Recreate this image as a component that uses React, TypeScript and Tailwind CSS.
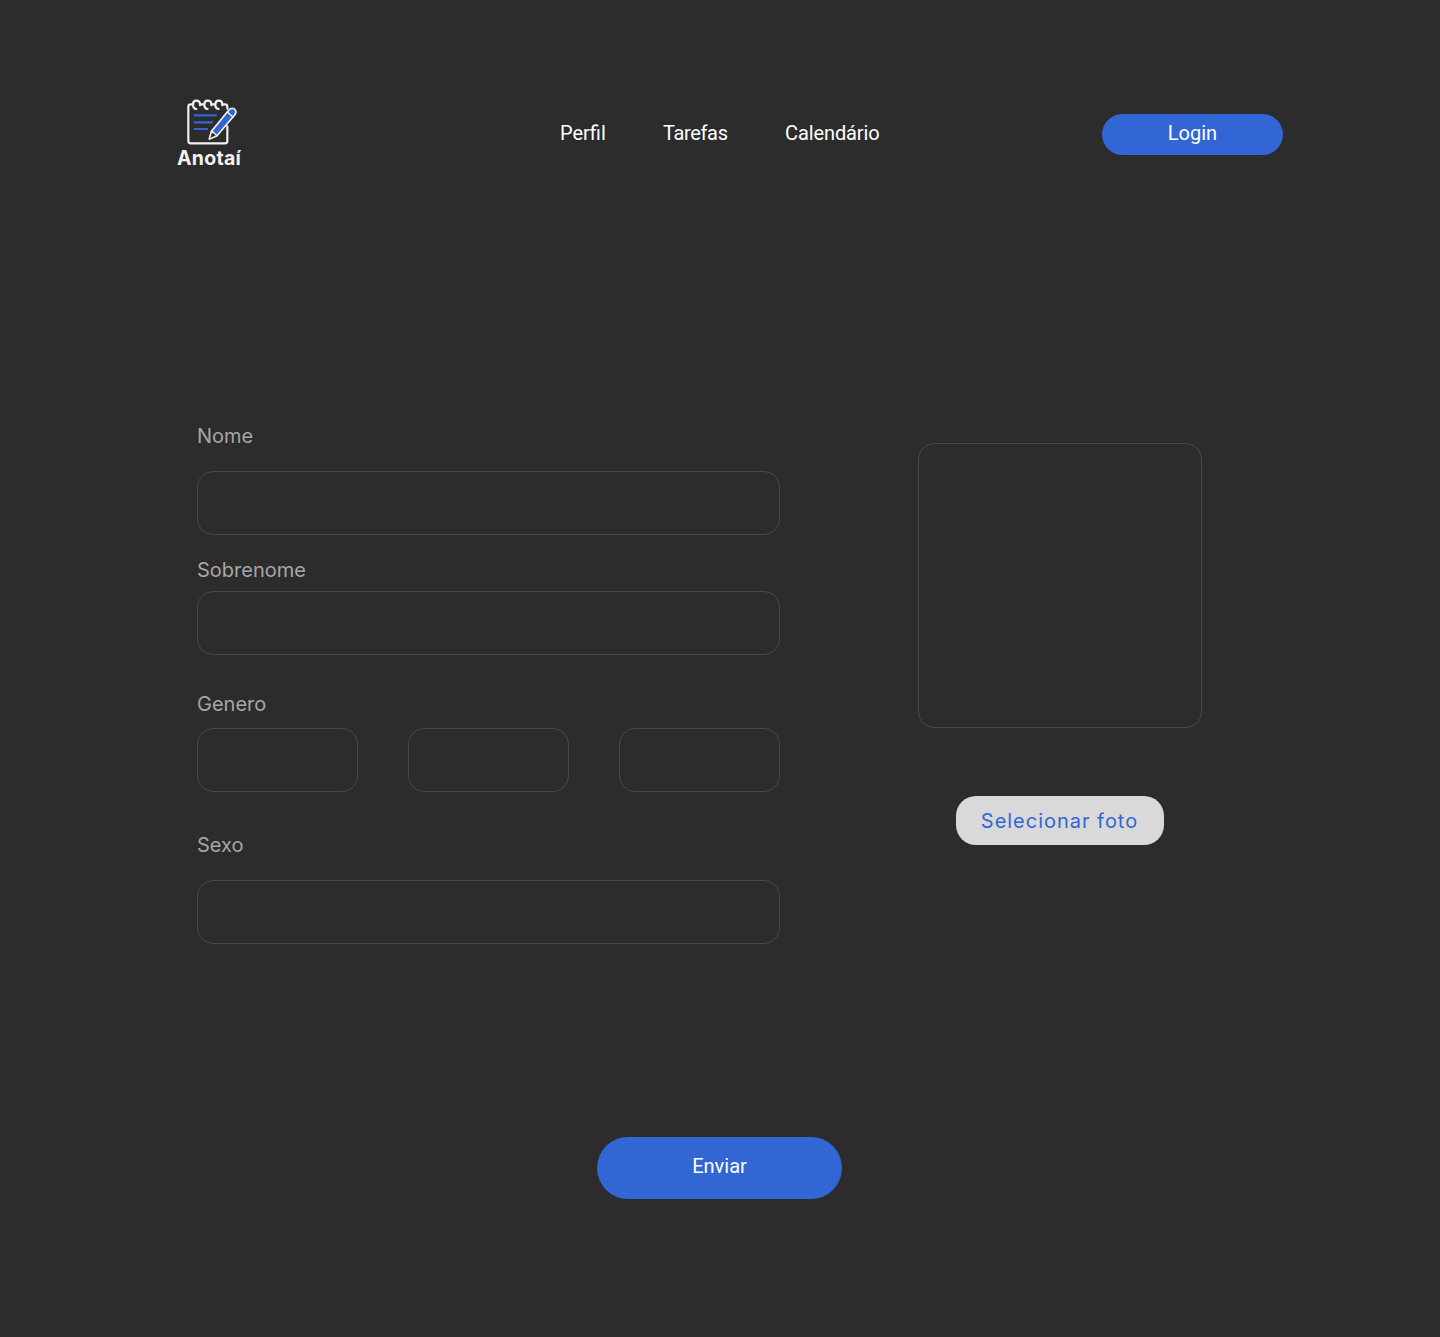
import type { ReactNode } from "react";

function Logo() {
  return (
    <a className="flex w-16 flex-col items-center" aria-label="Anotaí">
      <svg className="ml-[5px] h-[47px] w-[52px] shrink-0" viewBox="63 24 156 141" fill="none" strokeLinecap="round" strokeLinejoin="round">
        <g stroke="#f4f2ef" strokeWidth="6.5">
          <path d="M84 43H77Q70 43 70 50V152Q70 160 78 160H180Q187 160 187 153V109" />
          <path d="M105 43H116M139 43H149M172 43H180Q187 43 187 50V56" />
          <path d="M94 57C86 57 84 49 84 43C84 35 89 32 94 32C101 32 105 36 105 43V46" />
          <path d="M128 57C120 57 118 49 118 43C118 35 123 32 128 32C135 32 139 36 139 43V46" />
          <path d="M161 57C153 57 151 49 151 43C151 35 156 32 161 32C168 32 172 36 172 43V46" />
        </g>
        <path d="M89 76H153M89 97H141M89 117H126" stroke="#3266d5" strokeWidth="6.5" />
        <path d="M133 147L140 123L191 61Q199 51 208 57Q217 65 209 75L156 137Z" fill="#3266d5" stroke="#f4f2ef" strokeWidth="5" />
        <path d="M140 123L156 137L133 147Z" fill="#2c2c2c" stroke="#f4f2ef" strokeWidth="4" />
        <path d="M187 66L204 81" stroke="#f4f2ef" strokeWidth="4" />
      </svg>
      <span className="mt-[3px] font-['Inter'] text-[19.5px] leading-[20px] font-bold tracking-[0.25px] text-[#f4f2ef]">Anotaí</span>
    </a>
  );
}

function Label({ children, htmlFor }: { children: ReactNode; htmlFor: string }) {
  return <label htmlFor={htmlFor} className="block h-6 text-[20px] leading-6 text-[#a6a6a6]">{children}</label>;
}

function Field({ id, className = "" }: { id: string; className?: string }) {
  return <input id={id} className={`block h-16 w-full rounded-2xl border border-[#484848] bg-transparent px-4 text-white outline-none ${className}`} />;
}

export default function App() {
  return (
    <div className="flex h-[1337px] w-[1440px] flex-col overflow-hidden bg-[#2c2c2c] font-['Inter',sans-serif]">
      <header className="mt-[98px] flex h-[78px] pr-[157px] pl-[177px] font-['Roboto',sans-serif] text-[20px] leading-6 text-white">
        <Logo />
        <nav className="mt-[23px] ml-[319px] flex">
          <a className="w-[103px]">Perfil</a>
          <a className="w-[122px] tracking-[-0.35px]">Tarefas</a>
          <a className="tracking-[-0.1px]">Calendário</a>
        </nav>
        <button className="mt-4 ml-auto h-[41px] w-[181px] rounded-full bg-[#3266d5] pb-[3px]">Login</button>
      </header>

      <main className="mt-[248px] flex pl-[197px]">
        <form className="w-[583px]">
          <Label htmlFor="nome">Nome</Label>
          <Field id="nome" className="mt-[23px]" />
          <div className="mt-[23px]">
            <Label htmlFor="sobrenome">Sobrenome</Label>
            <Field id="sobrenome" className="mt-[9px]" />
          </div>
          <div className="mt-[37px]">
            <Label htmlFor="genero-1">Genero</Label>
            <div className="mt-3 grid grid-cols-3 gap-[50px]">
              <Field id="genero-1" />
              <Field id="genero-2" />
              <Field id="genero-3" />
            </div>
          </div>
          <div className="mt-[41px]">
            <Label htmlFor="sexo">Sexo</Label>
            <Field id="sexo" className="mt-[23px]" />
          </div>
        </form>
        <aside className="mt-[19px] ml-[138px] flex w-[284px] flex-col items-center">
          <div className="h-[285px] w-full rounded-2xl border border-[#484848]" />
          <button className="mt-[68px] h-[49px] w-[208px] rounded-[20px] bg-[#d9d9d9] pr-px text-[20px] tracking-[0.98px] text-[#3266d5]">Selecionar foto</button>
        </aside>
      </main>

      <button className="mt-[193px] ml-[597px] h-[62px] w-[245px] rounded-full bg-[#3266d5] pb-[5px] font-['Roboto',sans-serif] text-[20px] text-white">Enviar</button>
    </div>
  );
}
